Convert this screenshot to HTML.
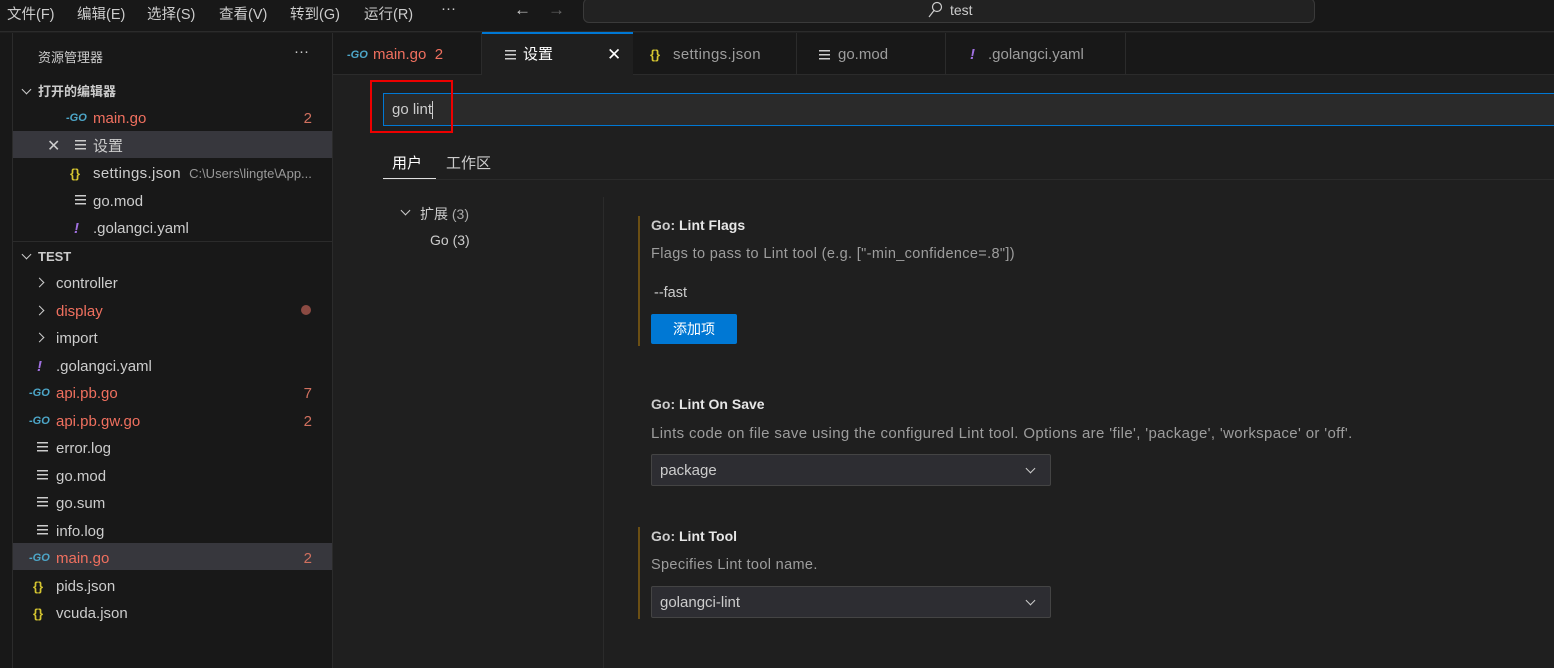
<!DOCTYPE html>
<html><head><meta charset="utf-8"><style>
*{margin:0;padding:0;box-sizing:border-box}
body{width:1554px;height:668px;background:#1f1f1f;font-family:"Liberation Sans","Noto Sans CJK SC",sans-serif;color:#ccc;font-size:15px;position:relative;overflow:hidden}
.a{position:absolute;white-space:nowrap}
.red{color:#f0705f}
.go{color:#4da6c8;font-weight:bold;font-size:11px;font-style:italic}
.br{color:#d4c430;font-size:13px;font-weight:bold}
.ex{color:#a070e0;font-weight:bold;font-style:italic}
.ln{display:inline-block;width:11px;height:10px;background:linear-gradient(#ccc 0 1.5px,transparent 1.5px 4px,#ccc 4px 5.5px,transparent 5.5px 8px,#ccc 8px 9.5px,transparent 9.5px);vertical-align:middle}
.row{position:absolute;left:13px;width:319px;height:27px;line-height:31px}
.num{position:absolute;right:20px;color:#d0705f}
.chev{display:inline-block;width:7px;height:7px;border-right:1.5px solid #ccc;border-bottom:1.5px solid #ccc;transform:rotate(-45deg)}
.chevd{display:inline-block;width:7px;height:7px;border-right:1.5px solid #ccc;border-bottom:1.5px solid #ccc;transform:rotate(45deg)}
.sel{background:#2d2d32;border:1px solid #444;border-radius:2px;height:32px;width:400px;left:651px;color:#ccc;line-height:32px;padding-left:8px}
.m{position:absolute;top:3px;font-size:14.5px;color:#ccc}
.d{letter-spacing:0.35px}
</style></head><body>
<div class="a" style="left:0;top:0;width:1554px;height:32px;background:#181818;border-bottom:1px solid #2b2b2b"></div>
<span class="m" style="left:7px">文件(F)</span><span class="m" style="left:77px">编辑(E)</span><span class="m" style="left:147px">选择(S)</span><span class="m" style="left:219px">查看(V)</span><span class="m" style="left:290px">转到(G)</span><span class="m" style="left:364px">运行(R)</span>
<div class="a" style="left:441px;top:0px;font-size:15px">···</div>
<div class="a" style="left:514px;top:0px;font-size:17px;color:#ccc">←</div>
<div class="a" style="left:548px;top:0px;font-size:17px;color:#666">→</div>
<div class="a" style="left:583px;top:-2px;width:732px;height:25px;background:#222;border:1px solid #3a3a3a;border-radius:6px"></div>
<svg class="a" style="left:927px;top:1px" width="16" height="18"><circle cx="10" cy="6" r="4.5" fill="none" stroke="#ccc" stroke-width="1.2"/><line x1="7" y1="9.5" x2="2" y2="16" stroke="#ccc" stroke-width="1.2"/></svg>
<div class="a" style="left:950px;top:2px;font-size:14px">test</div>
<div class="a" style="left:0;top:33px;width:12px;height:635px;background:#181818"></div>
<div class="a" style="left:12px;top:33px;width:321px;height:635px;background:#181818;border-left:1px solid #2b2b2b;border-right:1px solid #2b2b2b"></div>
<div class="a" style="left:38px;top:47px;font-size:13px">资源管理器</div>
<div class="a" style="left:294px;top:43px;font-size:15px">···</div>
<div class="row" style="top:76px;font-weight:bold;font-size:13px"><span class="chevd" style="margin:0 8px 0 10px;position:relative;top:-3px"></span>打开的编辑器</div>
<div class="row" style="top:103px"><span class="go" style="position:absolute;left:53px">-GO</span><span class="red" style="position:absolute;left:80px">main.go</span><span class="num">2</span></div>
<div class="row" style="top:131px;background:#37373d"><span style="position:absolute;left:34px;font-size:16px">✕</span><span class="ln" style="position:absolute;left:62px;top:9px"></span><span style="position:absolute;left:80px">设置</span></div>
<div class="row" style="top:158px"><span class="br" style="position:absolute;left:57px">{}</span><span style="position:absolute;left:80px" class="d">settings.json <span style="font-size:13px;color:#999;letter-spacing:0">&nbsp;C:\Users\lingte\App...</span></span></div>
<div class="row" style="top:186px"><span class="ln" style="position:absolute;left:62px;top:9px"></span><span style="position:absolute;left:80px">go.mod</span></div>
<div class="row" style="top:213px"><span class="ex" style="position:absolute;left:61px">!</span><span style="position:absolute;left:80px">.golangci.yaml</span></div>
<div class="a" style="left:13px;top:241px;width:319px;height:1px;background:#2b2b2b"></div>
<div class="row" style="top:241px;font-weight:bold;font-size:13px"><span class="chevd" style="margin:0 8px 0 10px;position:relative;top:-3px"></span>TEST</div>
<div class="row" style="top:268px"><span class="chev" style="position:absolute;left:23px;top:11px"></span><span style="position:absolute;left:43px">controller</span></div>
<div class="row" style="top:296px"><span class="chev" style="position:absolute;left:23px;top:11px"></span><span class="red" style="position:absolute;left:43px">display</span><span style="position:absolute;left:288px;top:9px;width:10px;height:10px;border-radius:50%;background:#8b4a42"></span></div>
<div class="row" style="top:323px"><span class="chev" style="position:absolute;left:23px;top:11px"></span><span style="position:absolute;left:43px">import</span></div>
<div class="row" style="top:351px"><span class="ex" style="position:absolute;left:24px">!</span><span style="position:absolute;left:43px">.golangci.yaml</span></div>
<div class="row" style="top:378px"><span class="go" style="position:absolute;left:16px">-GO</span><span class="red" style="position:absolute;left:43px">api.pb.go</span><span class="num">7</span></div>
<div class="row" style="top:406px"><span class="go" style="position:absolute;left:16px">-GO</span><span class="red" style="position:absolute;left:43px">api.pb.gw.go</span><span class="num">2</span></div>
<div class="row" style="top:433px"><span class="ln" style="position:absolute;left:24px;top:9px"></span><span style="position:absolute;left:43px">error.log</span></div>
<div class="row" style="top:461px"><span class="ln" style="position:absolute;left:24px;top:9px"></span><span style="position:absolute;left:43px">go.mod</span></div>
<div class="row" style="top:488px"><span class="ln" style="position:absolute;left:24px;top:9px"></span><span style="position:absolute;left:43px">go.sum</span></div>
<div class="row" style="top:516px"><span class="ln" style="position:absolute;left:24px;top:9px"></span><span style="position:absolute;left:43px">info.log</span></div>
<div class="row" style="top:543px;background:#37373d"><span class="go" style="position:absolute;left:16px">-GO</span><span class="red" style="position:absolute;left:43px">main.go</span><span class="num">2</span></div>
<div class="row" style="top:571px"><span class="br" style="position:absolute;left:20px">{}</span><span style="position:absolute;left:43px">pids.json</span></div>
<div class="row" style="top:598px"><span class="br" style="position:absolute;left:20px">{}</span><span style="position:absolute;left:43px">vcuda.json</span></div>
<div class="a" style="left:333px;top:33px;width:1221px;height:42px;background:#181818;border-bottom:1px solid #2b2b2b"></div>
<div class="a" style="left:333px;top:33px;width:149px;height:42px;border-right:1px solid #2b2b2b;line-height:44px"><span class="go" style="position:absolute;left:14px">-GO</span><span class="red" style="position:absolute;left:40px">main.go&nbsp; 2</span></div>
<div class="a" style="left:482px;top:32px;width:151px;height:44px;background:#1f1f1f;border-top:2px solid #0078d4;line-height:42px"><span class="ln" style="position:absolute;left:23px;top:16px"></span><span style="position:absolute;left:41px;color:#fff">设置</span><span style="position:absolute;left:125px;color:#fff;font-size:17px">✕</span></div>
<div class="a" style="left:633px;top:33px;width:164px;height:42px;border-right:1px solid #2b2b2b;line-height:44px;color:#9d9d9d"><span class="br" style="position:absolute;left:17px">{}</span><span style="position:absolute;left:40px" class="d">settings.json</span></div>
<div class="a" style="left:797px;top:33px;width:149px;height:42px;border-right:1px solid #2b2b2b;line-height:44px;color:#9d9d9d"><span class="ln" style="position:absolute;left:22px;top:17px"></span><span style="position:absolute;left:41px">go.mod</span></div>
<div class="a" style="left:946px;top:33px;width:180px;height:42px;border-right:1px solid #2b2b2b;line-height:44px;color:#9d9d9d"><span class="ex" style="position:absolute;left:24px">!</span><span style="position:absolute;left:42px">.golangci.yaml</span></div>
<div class="a" style="left:383px;top:93px;width:1180px;height:33px;background:#2a2a2a;border:1px solid #0078d4"></div>
<div class="a" style="left:392px;top:101px;color:#ccc">go lint<span style="display:inline-block;width:1px;height:18px;background:#ccc;vertical-align:middle"></span></div>
<div class="a" style="left:370px;top:80px;width:83px;height:53px;border:2px solid #e00"></div>
<div class="a" style="left:392px;top:152px;color:#fff">用户</div>
<div class="a" style="left:446px;top:152px;color:#ccc">工作区</div>
<div class="a" style="left:383px;top:179px;width:1171px;height:1px;background:#2b2b2b"></div>
<div class="a" style="left:383px;top:178px;width:53px;height:1px;background:#e0e0e0"></div>
<div class="a" style="left:402px;top:204px"><span class="chevd" style="position:relative;top:-3px"></span></div>
<div class="a" style="left:420px;top:204px;font-size:14px">扩展 <span style="color:#aaa">(3)</span></div>
<div class="a" style="left:430px;top:232px;font-size:14px">Go (3)</div>
<div class="a" style="left:603px;top:197px;width:1px;height:471px;background:#2b2b2b"></div>
<div class="a" style="left:638px;top:216px;width:2px;height:130px;background:#6b4f14"></div>
<div class="a" style="left:651px;top:217px;font-size:14px;font-weight:bold;color:#ccc">Go: <span style="color:#e7e7e7">Lint Flags</span></div>
<div class="a d" style="left:651px;top:246px;color:#9d9d9d;font-size:14.5px">Flags to pass to Lint tool (e.g. ["-min_confidence=.8"])</div>
<div class="a" style="left:654px;top:285px;font-size:14.5px">--fast</div>
<div class="a" style="left:651px;top:314px;width:86px;height:30px;background:#0078d4;border-radius:2px;color:#fff;text-align:center;line-height:30px;font-size:14px">添加项</div>
<div class="a" style="left:651px;top:396px;font-size:14px;font-weight:bold;color:#ccc">Go: <span style="color:#e7e7e7">Lint On Save</span></div>
<div class="a d" style="left:651px;top:425px;color:#9d9d9d;font-size:15px">Lints code on file save using the configured Lint tool. Options are 'file', 'package', 'workspace' or 'off'.</div>
<div class="a sel" style="top:454px">package<span class="chevd" style="position:absolute;right:16px;top:10px"></span></div>
<div class="a" style="left:638px;top:527px;width:2px;height:92px;background:#6b4f14"></div>
<div class="a" style="left:651px;top:528px;font-size:14px;font-weight:bold;color:#ccc">Go: <span style="color:#e7e7e7">Lint Tool</span></div>
<div class="a d" style="left:651px;top:557px;color:#9d9d9d;font-size:14.5px">Specifies Lint tool name.</div>
<div class="a sel" style="top:586px">golangci-lint<span class="chevd" style="position:absolute;right:16px;top:10px"></span></div>
</body></html>
